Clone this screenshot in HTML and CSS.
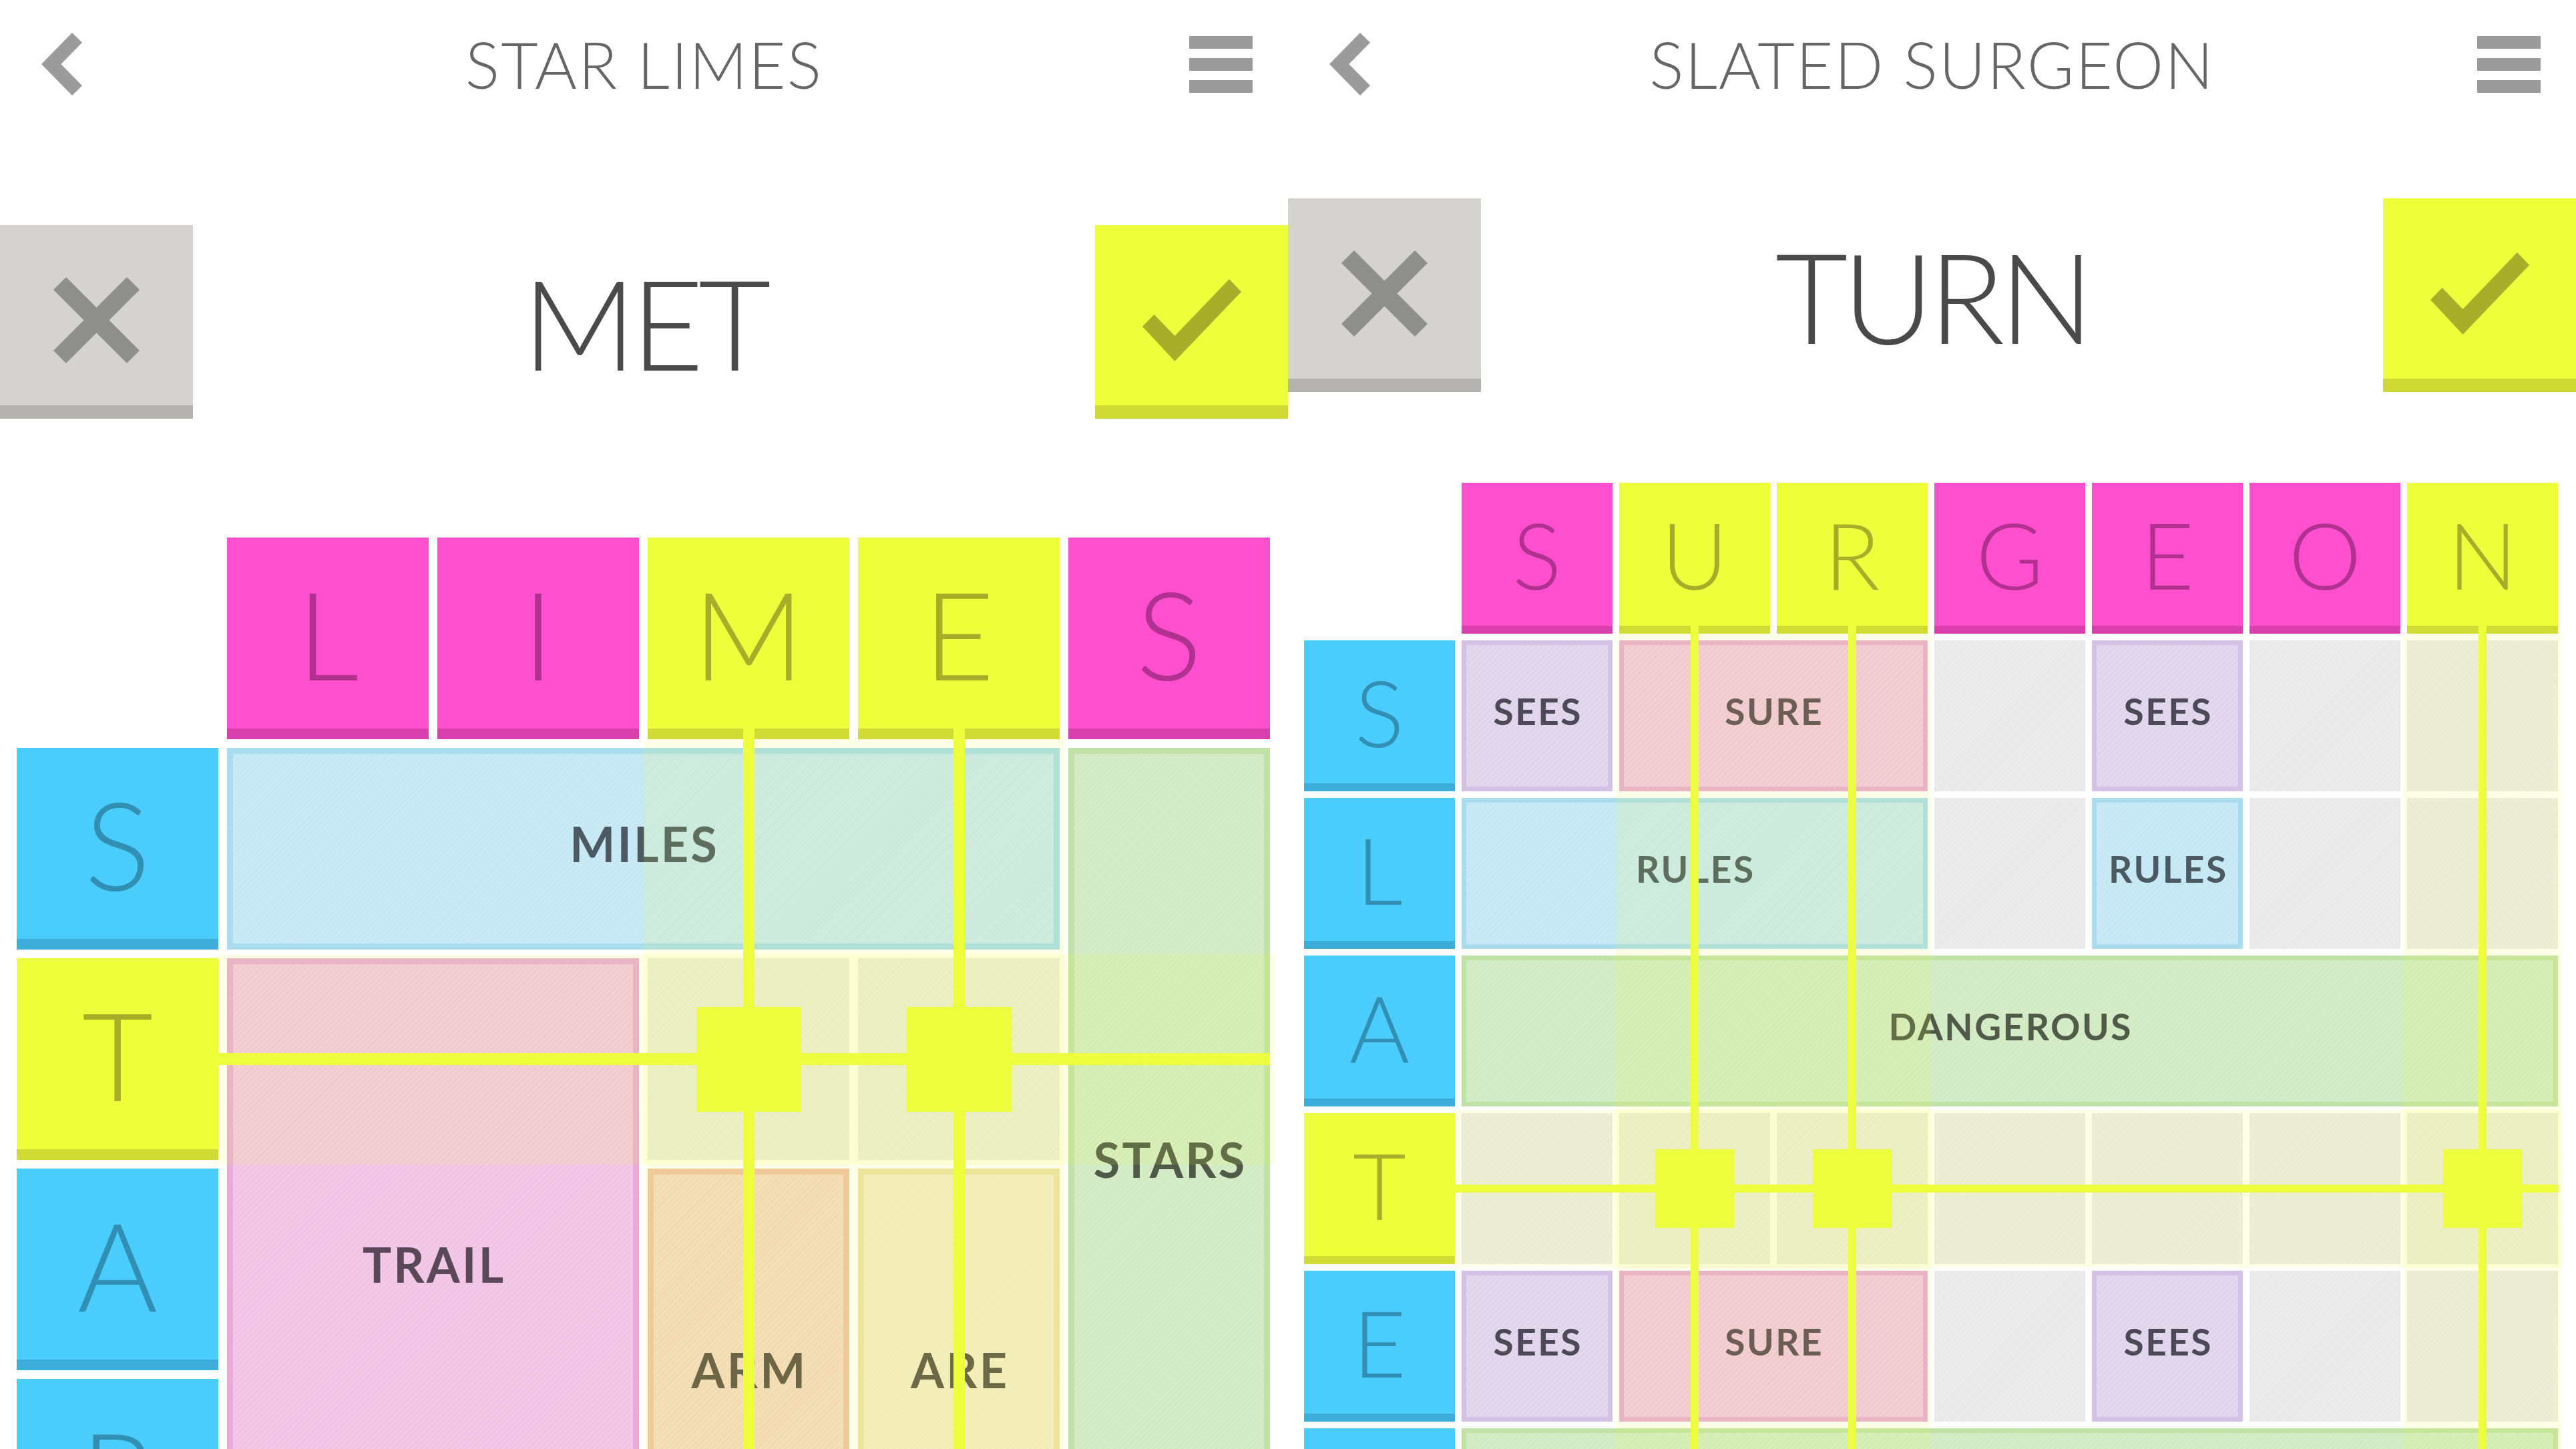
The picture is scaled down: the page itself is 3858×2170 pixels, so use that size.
FILE: index.html
```html
<!DOCTYPE html>
<html lang="en">
<head>
<meta charset="utf-8">
<title>Star Limes / Slated Surgeon</title>
<link rel="stylesheet" href="styles.css">
</head>
<body>
<div class="screen">
  <section class="panel panel-a">
    <header class="bar">
      <svg class="back" viewBox="0 0 61 94"><polygon points="46,0 61,14.7 29.4,47 61,79.3 46,94 0,47"/></svg>
      <h1 class="title">STAR LIMES</h1>
      <svg class="menu" viewBox="0 0 95 85"><rect x="0" y="0" width="95" height="19"/><rect x="0" y="33" width="95" height="19"/><rect x="0" y="66" width="95" height="19"/></svg>
    </header>
    <div class="guess">
      <div class="btn btn-no"><svg class="icon-x" viewBox="0 0 129 129"><line x1="9.5" y1="9.5" x2="119.5" y2="119.5"/><line x1="119.5" y1="9.5" x2="9.5" y2="119.5"/></svg></div>
      <div class="word">MET</div>
      <div class="btn btn-yes"><svg class="icon-check" viewBox="0 0 148 123"><polygon points="130,0 148,19 48.5,123 0,71 17.6,53 48.5,85"/></svg></div>
    </div>
    <div class="board board-a">
      <div class="tile pink c2 r1">L</div>
      <div class="tile pink c3 r1">I</div>
      <div class="tile lime c4 r1">M</div>
      <div class="tile lime c5 r1">E</div>
      <div class="tile pink c6 r1">S</div>
      <div class="tile blue c1 r2">S</div>
      <div class="tile lime c1 r3">T</div>
      <div class="tile blue c1 r4">A</div>
      <div class="tile blue c1 r5">R</div>
      <div class="wt w-blue c2 r2 w4">MILES</div>
      <div class="wt w-green c6 r2 h4">STARS</div>
      <div class="wt w-pink c2 r3 w2 h3">TRAIL</div>
      <div class="empty c4 r3"></div>
      <div class="empty c5 r3"></div>
      <div class="wt w-orange c4 r4 h2">ARM</div>
      <div class="wt w-sand c5 r4 h2">ARE</div>
      <div class="hl hl-col c4 w2 r2 rend"></div>
      <div class="hl hl-row c2 cend r3"></div>
      <div class="line vline c4 r2 rend"></div>
      <div class="line vline c5 r2 rend"></div>
      <div class="line hline c2 cend r3"></div>
      <div class="line knot c4 r3"></div>
      <div class="line knot c5 r3"></div>
    </div>
  </section>

  <section class="panel panel-b">
    <header class="bar">
      <svg class="back" viewBox="0 0 61 94"><polygon points="46,0 61,14.7 29.4,47 61,79.3 46,94 0,47"/></svg>
      <h1 class="title">SLATED SURGEON</h1>
      <svg class="menu" viewBox="0 0 95 85"><rect x="0" y="0" width="95" height="19"/><rect x="0" y="33" width="95" height="19"/><rect x="0" y="66" width="95" height="19"/></svg>
    </header>
    <div class="guess">
      <div class="btn btn-no"><svg class="icon-x" viewBox="0 0 129 129"><line x1="9.5" y1="9.5" x2="119.5" y2="119.5"/><line x1="119.5" y1="9.5" x2="9.5" y2="119.5"/></svg></div>
      <div class="word">TURN</div>
      <div class="btn btn-yes"><svg class="icon-check" viewBox="0 0 148 123"><polygon points="130,0 148,19 48.5,123 0,71 17.6,53 48.5,85"/></svg></div>
    </div>
    <div class="board board-b">
      <div class="tile pink c2 r1">S</div>
      <div class="tile lime c3 r1">U</div>
      <div class="tile lime c4 r1">R</div>
      <div class="tile pink c5 r1">G</div>
      <div class="tile pink c6 r1">E</div>
      <div class="tile pink c7 r1">O</div>
      <div class="tile lime c8 r1">N</div>
      <div class="tile blue c1 r2">S</div>
      <div class="tile blue c1 r3">L</div>
      <div class="tile blue c1 r4">A</div>
      <div class="tile lime c1 r5">T</div>
      <div class="tile blue c1 r6">E</div>
      <div class="tile blue c1 r7">D</div>

      <div class="wt w-purple c2 r2">SEES</div>
      <div class="wt w-pink c3 r2 w2">SURE</div>
      <div class="empty c5 r2"></div>
      <div class="wt w-purple c6 r2">SEES</div>
      <div class="empty c7 r2"></div>
      <div class="empty c8 r2"></div>

      <div class="wt w-blue c2 r3 w3">RULES</div>
      <div class="empty c5 r3"></div>
      <div class="wt w-blue c6 r3">RULES</div>
      <div class="empty c7 r3"></div>
      <div class="empty c8 r3"></div>

      <div class="wt w-green c2 r4 w7">DANGEROUS</div>

      <div class="empty c2 r5"></div>
      <div class="empty c3 r5"></div>
      <div class="empty c4 r5"></div>
      <div class="empty c5 r5"></div>
      <div class="empty c6 r5"></div>
      <div class="empty c7 r5"></div>
      <div class="empty c8 r5"></div>

      <div class="wt w-purple c2 r6">SEES</div>
      <div class="wt w-pink c3 r6 w2">SURE</div>
      <div class="empty c5 r6"></div>
      <div class="wt w-purple c6 r6">SEES</div>
      <div class="empty c7 r6"></div>
      <div class="empty c8 r6"></div>

      <div class="wt w-green c2 r7 w7"></div>

      <div class="hl hl-col c3 w2 r2 rend"></div>
      <div class="hl hl-col c8 r2 rend"></div>
      <div class="hl hl-row c2 cend r5"></div>
      <div class="line vline c3 r2 rend"></div>
      <div class="line vline c4 r2 rend"></div>
      <div class="line vline c8 r2 rend"></div>
      <div class="line hline c2 cend r5"></div>
      <div class="line knot c3 r5"></div>
      <div class="line knot c4 r5"></div>
      <div class="line knot c8 r5"></div>
    </div>
  </section>
</div>
</body>
</html>
```

FILE: styles.css
```css
* { box-sizing: border-box; margin: 0; padding: 0; }

html, body {
  width: 3858px;
  height: 2170px;
  overflow: hidden;
  background: #ffffff;
}

body {
  font-family: "Lato", "Open Sans", "DejaVu Sans", sans-serif;
}

.screen {
  display: flex;
  width: 3858px;
  height: 2170px;
  overflow: hidden;
}

.panel {
  flex: 0 0 1929px;
  width: 1929px;
  height: 2170px;
  overflow: hidden;
  display: flex;
  flex-direction: column;
}

/* ---------- top bar ---------- */
.bar {
  flex: none;
  height: 192px;
  display: grid;
  grid-template-columns: 1fr auto 1fr;
  align-items: center;
}

.back {
  justify-self: start;
  margin-left: 62px;
  width: 61px;
  height: 94px;
  fill: #9b9b9b;
}

.menu {
  justify-self: end;
  margin-right: 53px;
  width: 95px;
  height: 85px;
  fill: #9b9b9b;
}

.title {
  font-weight: 300;
  font-size: 96px;
  line-height: 1;
  color: #666666;
  letter-spacing: 2px;
  white-space: nowrap;
}

/* ---------- guess row ---------- */
.guess {
  flex: none;
  display: grid;
  grid-template-columns: 289px 1fr 289px;
  height: 290px;
}

.panel-a .guess { margin-top: 145px; }
.panel-b .guess { margin-top: 105px; }

.btn {
  display: flex;
  align-items: center;
  justify-content: center;
  padding-top: 14px;
  border-bottom-width: 20px;
  border-bottom-style: solid;
}

.btn-no {
  background: #d4d3cf;
  border-bottom-color: #b4b3af;
}

.btn-yes {
  background: #eeff3c;
  border-bottom-color: #cfd934;
}

.icon-x {
  width: 129px;
  height: 129px;
  stroke: #8f8f8d;
  stroke-width: 27;
  stroke-linecap: butt;
}

.icon-check {
  width: 148px;
  height: 123px;
  fill: #a6ae2a;
}

.word {
  display: flex;
  align-items: center;
  justify-content: center;
  font-weight: 300;
  font-size: 188px;
  line-height: 1;
  color: #4a4a4a;
  letter-spacing: -8px;
  padding-left: -8px;
}

/* ---------- boards ---------- */
.board {
  flex: none;
  display: grid;
}

.board-a {
  margin: 178px 0 0 25px;
  grid-template-columns: repeat(6, 302px);
  grid-template-rows: repeat(5, 302px);
  gap: 13px;
}

.board-b {
  margin: 136px 0 0 24px;
  grid-template-columns: repeat(8, 226px);
  grid-template-rows: repeat(7, 226px);
  gap: 10px;
}

/* grid placement */
.c1 { grid-column-start: 1; }
.c2 { grid-column-start: 2; }
.c3 { grid-column-start: 3; }
.c4 { grid-column-start: 4; }
.c5 { grid-column-start: 5; }
.c6 { grid-column-start: 6; }
.c7 { grid-column-start: 7; }
.c8 { grid-column-start: 8; }
.r1 { grid-row-start: 1; }
.r2 { grid-row-start: 2; }
.r3 { grid-row-start: 3; }
.r4 { grid-row-start: 4; }
.r5 { grid-row-start: 5; }
.r6 { grid-row-start: 6; }
.r7 { grid-row-start: 7; }
.w2 { grid-column-end: span 2; }
.w3 { grid-column-end: span 3; }
.w4 { grid-column-end: span 4; }
.w7 { grid-column-end: span 7; }
.h2 { grid-row-end: span 2; }
.h3 { grid-row-end: span 3; }
.h4 { grid-row-end: span 4; }
.rend { grid-row-end: -1; }
.cend { grid-column-end: -1; }

/* letter tiles */
.tile {
  display: flex;
  align-items: center;
  justify-content: center;
  line-height: 1;
  font-weight: 300;
  border-bottom-style: solid;
}

.board-a .tile { font-size: 184px; border-bottom-width: 16px; }
.board-b .tile { font-size: 138px; border-bottom-width: 12px; }

.pink { background: #ff4fcf; border-bottom-color: #d940ad; color: #b03190; }
.lime { background: #eeff3c; border-bottom-color: #d0db33; color: #a6ae29; }
.blue { background: #4acdfd; border-bottom-color: #3badd8; color: #318fb3; }

/* word tiles */
.wt {
  display: flex;
  align-items: center;
  justify-content: center;
  font-weight: 700;
  letter-spacing: 0.045em;
  padding-left: 0.045em;
  padding-bottom: 0.22em;
  line-height: 1;
  border-style: solid;
  background-image: repeating-linear-gradient(135deg, rgba(255,255,255,0.16) 0 2px, rgba(255,255,255,0) 2px 6px);
}

.board-a .wt { border-width: 9px; font-size: 72px; }
.board-b .wt { border-width: 7px; font-size: 55px; }

.w-blue   { background-color: #c4e7f4; border-color: #a9dcee; color: #4b5a62; }
.w-pink   { background-color: #f1c3e4; border-color: #e9aad8; color: #5a4858; }
.w-purple { background-color: #e0d4ec; border-color: #d3c2e4; color: #4d4a57; }
.w-green  { background-color: #d1eac2; border-color: #c0e2a7; color: #4f5a48; }
.w-orange { background-color: #f4d6c2; border-color: #efc3a5; color: #5a5048; }
.w-sand   { background-color: #f3ebc9; border-color: #ece2a7; color: #5a5548; }

.empty {
  background-color: #e9e9e9;
  background-image: repeating-linear-gradient(135deg, rgba(255,255,255,0.18) 0 2px, rgba(255,255,255,0) 2px 6px);
}

/* highlight overlays */
.hl { background: rgba(238, 255, 59, 0.12); }
.board-a .hl-col { margin: -13px -6.5px 0; }
.board-a .hl-row { margin: -6.5px -6.5px -6.5px -13px; }
.board-b .hl-col { margin: -10px -5px 0; }
.board-b .hl-row { margin: -5px -5px -5px -10px; }

/* selection lines */
.line { background: #edff3c; }

.board-a .vline { width: 17px; justify-self: center; margin-top: -29px; }
.board-a .hline { height: 18px; align-self: center; margin-left: -13px; }
.board-a .knot  { width: 157px; height: 157px; place-self: center; }

.board-b .vline { width: 12px; justify-self: center; margin-top: -22px; }
.board-b .hline { height: 12px; align-self: center; margin-left: -10px; }
.board-b .knot  { width: 118px; height: 118px; place-self: center; }
```
